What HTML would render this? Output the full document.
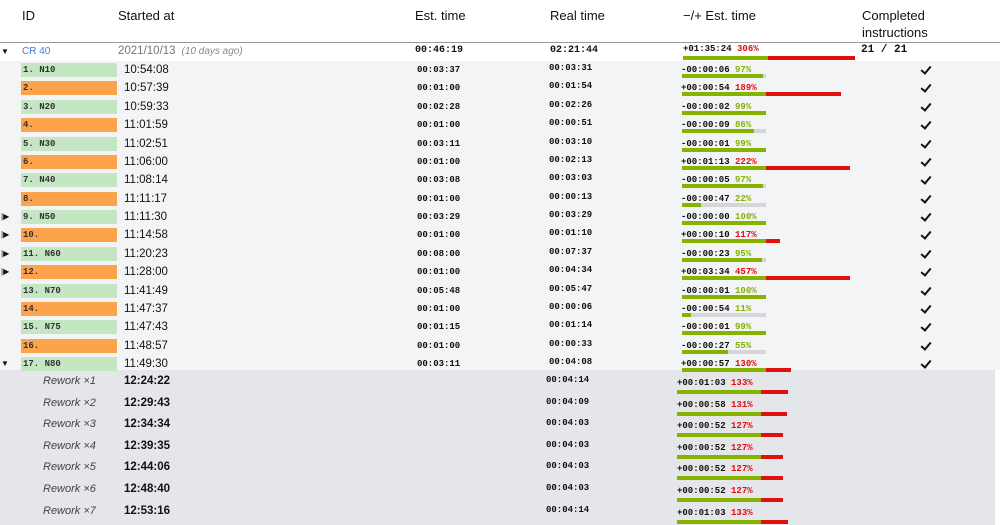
<!DOCTYPE html>
<html><head><meta charset="utf-8"><style>
*{margin:0;padding:0;box-sizing:border-box}
body{width:1000px;height:525px;overflow:hidden;background:#fff;font-family:"Liberation Sans",sans-serif;color:#111;position:relative}
.h{position:absolute;top:7px;font-size:13px;line-height:17px}
.a{position:absolute}
.m{font-family:"Liberation Mono",monospace;font-weight:600}
.r{position:absolute;left:0;width:1000px;height:18.4px}
.lb{position:absolute;left:21px;top:2px;width:96px;height:14px;font-size:9px;line-height:14px;padding-left:2px;font-family:"Liberation Mono",monospace;font-weight:bold;color:#333}
.g{background:#c4e6c2}.o{background:#fda34c}
.st{position:absolute;left:124px;top:2px;font-size:11.5px;line-height:14px}
.et{position:absolute;left:417px;top:3px;font-size:9px;line-height:12px}
.rt{position:absolute;left:549px;top:1px;font-size:9px;line-height:12px}
.df{position:absolute;left:681px;top:3px;font-size:9px;line-height:12px}
.pg{color:#86b300}.pr{color:#e01010}
.bar{position:absolute;left:682px;top:13px;height:4px}
.gr{position:absolute;left:0;top:0;height:4px;background:#86b300}
.rd{position:absolute;top:0;height:4px;background:#e01010}
.gy{position:absolute;top:0;height:4px;background:#d4d6da}
.ck{position:absolute;left:921px;top:3px;width:12px;height:10px;background:none}
.ck::before{content:"";position:absolute;left:2px;top:0;width:4px;height:8px;border:solid #111;border-width:0 2px 2px 0;transform:rotate(40deg)}
.rw{position:absolute;left:0;width:995px;height:21.6px}
.rl{position:absolute;left:43px;top:3px;font-style:italic;font-size:11px;color:#444}
.rs{position:absolute;left:124px;top:3px;font-size:11.5px;font-weight:bold}
.rr{position:absolute;left:546px;top:3px;font-size:9px}
.rd2{position:absolute;left:677px;top:6px;font-size:9px}
.rb{position:absolute;left:677px;top:18px;height:4px;width:84px;background:#86b300}
.tri{position:absolute;left:1px;font-size:8px}
</style></head><body>
<div class="h" style="left:22px">ID</div>
<div class="h" style="left:118px">Started at</div>
<div class="h" style="left:415px">Est. time</div>
<div class="h" style="left:550px">Real time</div>
<div class="h" style="left:683px">−/+ Est. time</div>
<div class="h" style="left:862px">Completed<br>instructions</div>
<div class="a" style="left:0;top:42px;width:1000px;height:1px;background:#999"></div>

<div class="r" style="top:43px;background:#fff">
<span class="tri" style="top:4px">▼</span>
<span class="a" style="left:22px;top:3px;font-size:10px;color:#3b7ddd">CR 40</span>
<span class="a" style="left:118px;top:2px;font-size:11.5px;color:#777">2021/10/13 <i style="font-size:10px;color:#888">&nbsp;(10 days ago)</i></span>
<span class="a m" style="left:415px;top:2px;font-size:10px">00:46:19</span>
<span class="a m" style="left:550px;top:2px;font-size:10px">02:21:44</span>
<span class="a m" style="left:683px;top:1px;font-size:9px">+01:35:24 <span class="pr">306%</span></span>
<div class="a" style="left:683px;top:13px;height:4px;width:85px;background:#86b300"></div>
<div class="a" style="left:768px;top:13px;height:4px;width:87px;background:#e01010"></div>
<span class="a m" style="left:861px;top:1px;font-size:11px">21 / 21</span>
</div>

<div class="a" style="left:0;top:61px;width:1000px;height:309px;background:#f3f4f6"></div>
<div class="a" style="left:0;top:370px;width:995px;height:155px;background:#e4e6ea"></div>

<div class="r" style="top:61px"><div class="lb g">1. N10</div><div class="st">10:54:08</div><div class="et m">00:03:37</div><div class="rt m">00:03:31</div><div class="df m">-00:00:06 <span class="pg">97%</span></div><div class="bar"><div class="gr" style="width:81px"></div><div class="gy" style="left:81px;width:3px"></div></div><div class="ck"></div></div>
<div class="r" style="top:79.4px"><div class="lb o">2.</div><div class="st">10:57:39</div><div class="et m">00:01:00</div><div class="rt m">00:01:54</div><div class="df m">+00:00:54 <span class="pr">189%</span></div><div class="bar"><div class="gr" style="width:84px"></div><div class="rd" style="left:84px;width:75px"></div></div><div class="ck"></div></div>
<div class="r" style="top:97.8px"><div class="lb g">3. N20</div><div class="st">10:59:33</div><div class="et m">00:02:28</div><div class="rt m">00:02:26</div><div class="df m">-00:00:02 <span class="pg">99%</span></div><div class="bar"><div class="gr" style="width:84px"></div></div><div class="ck"></div></div>
<div class="r" style="top:116.1px"><div class="lb o">4.</div><div class="st">11:01:59</div><div class="et m">00:01:00</div><div class="rt m">00:00:51</div><div class="df m">-00:00:09 <span class="pg">86%</span></div><div class="bar"><div class="gr" style="width:72px"></div><div class="gy" style="left:72px;width:12px"></div></div><div class="ck"></div></div>
<div class="r" style="top:134.5px"><div class="lb g">5. N30</div><div class="st">11:02:51</div><div class="et m">00:03:11</div><div class="rt m">00:03:10</div><div class="df m">-00:00:01 <span class="pg">99%</span></div><div class="bar"><div class="gr" style="width:84px"></div></div><div class="ck"></div></div>
<div class="r" style="top:152.9px"><div class="lb o">6.</div><div class="st">11:06:00</div><div class="et m">00:01:00</div><div class="rt m">00:02:13</div><div class="df m">+00:01:13 <span class="pr">222%</span></div><div class="bar"><div class="gr" style="width:84px"></div><div class="rd" style="left:84px;width:84px"></div></div><div class="ck"></div></div>
<div class="r" style="top:171.3px"><div class="lb g">7. N40</div><div class="st">11:08:14</div><div class="et m">00:03:08</div><div class="rt m">00:03:03</div><div class="df m">-00:00:05 <span class="pg">97%</span></div><div class="bar"><div class="gr" style="width:81px"></div><div class="gy" style="left:81px;width:3px"></div></div><div class="ck"></div></div>
<div class="r" style="top:189.6px"><div class="lb o">8.</div><div class="st">11:11:17</div><div class="et m">00:01:00</div><div class="rt m">00:00:13</div><div class="df m">-00:00:47 <span class="pg">22%</span></div><div class="bar"><div class="gr" style="width:19px"></div><div class="gy" style="left:19px;width:65px"></div></div><div class="ck"></div></div>
<div class="r" style="top:208px"><span class="tri" style="top:4px">|▶</span><div class="lb g">9. N50</div><div class="st">11:11:30</div><div class="et m">00:03:29</div><div class="rt m">00:03:29</div><div class="df m">-00:00:00 <span class="pg">100%</span></div><div class="bar"><div class="gr" style="width:84px"></div></div><div class="ck"></div></div>
<div class="r" style="top:226.4px"><span class="tri" style="top:4px">|▶</span><div class="lb o">10.</div><div class="st">11:14:58</div><div class="et m">00:01:00</div><div class="rt m">00:01:10</div><div class="df m">+00:00:10 <span class="pr">117%</span></div><div class="bar"><div class="gr" style="width:84px"></div><div class="rd" style="left:84px;width:14px"></div></div><div class="ck"></div></div>
<div class="r" style="top:244.8px"><span class="tri" style="top:4px">|▶</span><div class="lb g">11. N60</div><div class="st">11:20:23</div><div class="et m">00:08:00</div><div class="rt m">00:07:37</div><div class="df m">-00:00:23 <span class="pg">95%</span></div><div class="bar"><div class="gr" style="width:80px"></div><div class="gy" style="left:80px;width:4px"></div></div><div class="ck"></div></div>
<div class="r" style="top:263.1px"><span class="tri" style="top:4px">|▶</span><div class="lb o">12.</div><div class="st">11:28:00</div><div class="et m">00:01:00</div><div class="rt m">00:04:34</div><div class="df m">+00:03:34 <span class="pr">457%</span></div><div class="bar"><div class="gr" style="width:84px"></div><div class="rd" style="left:84px;width:84px"></div></div><div class="ck"></div></div>
<div class="r" style="top:281.5px"><div class="lb g">13. N70</div><div class="st">11:41:49</div><div class="et m">00:05:48</div><div class="rt m">00:05:47</div><div class="df m">-00:00:01 <span class="pg">100%</span></div><div class="bar"><div class="gr" style="width:84px"></div></div><div class="ck"></div></div>
<div class="r" style="top:299.9px"><div class="lb o">14.</div><div class="st">11:47:37</div><div class="et m">00:01:00</div><div class="rt m">00:00:06</div><div class="df m">-00:00:54 <span class="pg">11%</span></div><div class="bar"><div class="gr" style="width:9px"></div><div class="gy" style="left:9px;width:75px"></div></div><div class="ck"></div></div>
<div class="r" style="top:318.3px"><div class="lb g">15. N75</div><div class="st">11:47:43</div><div class="et m">00:01:15</div><div class="rt m">00:01:14</div><div class="df m">-00:00:01 <span class="pg">99%</span></div><div class="bar"><div class="gr" style="width:84px"></div></div><div class="ck"></div></div>
<div class="r" style="top:336.6px"><div class="lb o">16.</div><div class="st">11:48:57</div><div class="et m">00:01:00</div><div class="rt m">00:00:33</div><div class="df m">-00:00:27 <span class="pg">55%</span></div><div class="bar"><div class="gr" style="width:46px"></div><div class="gy" style="left:46px;width:38px"></div></div><div class="ck"></div></div>
<div class="r" style="top:355px"><span class="tri" style="top:4px">▼</span><div class="lb g">17. N80</div><div class="st">11:49:30</div><div class="et m">00:03:11</div><div class="rt m">00:04:08</div><div class="df m">+00:00:57 <span class="pr">130%</span></div><div class="bar"><div class="gr" style="width:84px"></div><div class="rd" style="left:84px;width:25px"></div></div><div class="ck"></div></div>

<div class="rw" style="top:372px"><span class="rl">Rework ×1</span><span class="rs">12:24:22</span><span class="rr m">00:04:14</span><span class="rd2 m">+00:01:03 <span class="pr">133%</span></span><div class="rb"></div><div class="a" style="left:761px;top:18px;height:4px;width:27px;background:#e01010"></div></div>
<div class="rw" style="top:393.6px"><span class="rl">Rework ×2</span><span class="rs">12:29:43</span><span class="rr m">00:04:09</span><span class="rd2 m">+00:00:58 <span class="pr">131%</span></span><div class="rb"></div><div class="a" style="left:761px;top:18px;height:4px;width:26px;background:#e01010"></div></div>
<div class="rw" style="top:415.2px"><span class="rl">Rework ×3</span><span class="rs">12:34:34</span><span class="rr m">00:04:03</span><span class="rd2 m">+00:00:52 <span class="pr">127%</span></span><div class="rb"></div><div class="a" style="left:761px;top:18px;height:4px;width:22px;background:#e01010"></div></div>
<div class="rw" style="top:436.8px"><span class="rl">Rework ×4</span><span class="rs">12:39:35</span><span class="rr m">00:04:03</span><span class="rd2 m">+00:00:52 <span class="pr">127%</span></span><div class="rb"></div><div class="a" style="left:761px;top:18px;height:4px;width:22px;background:#e01010"></div></div>
<div class="rw" style="top:458.4px"><span class="rl">Rework ×5</span><span class="rs">12:44:06</span><span class="rr m">00:04:03</span><span class="rd2 m">+00:00:52 <span class="pr">127%</span></span><div class="rb"></div><div class="a" style="left:761px;top:18px;height:4px;width:22px;background:#e01010"></div></div>
<div class="rw" style="top:480px"><span class="rl">Rework ×6</span><span class="rs">12:48:40</span><span class="rr m">00:04:03</span><span class="rd2 m">+00:00:52 <span class="pr">127%</span></span><div class="rb"></div><div class="a" style="left:761px;top:18px;height:4px;width:22px;background:#e01010"></div></div>
<div class="rw" style="top:501.6px"><span class="rl">Rework ×7</span><span class="rs">12:53:16</span><span class="rr m">00:04:14</span><span class="rd2 m">+00:01:03 <span class="pr">133%</span></span><div class="rb"></div><div class="a" style="left:761px;top:18px;height:4px;width:27px;background:#e01010"></div></div>
</body></html>
